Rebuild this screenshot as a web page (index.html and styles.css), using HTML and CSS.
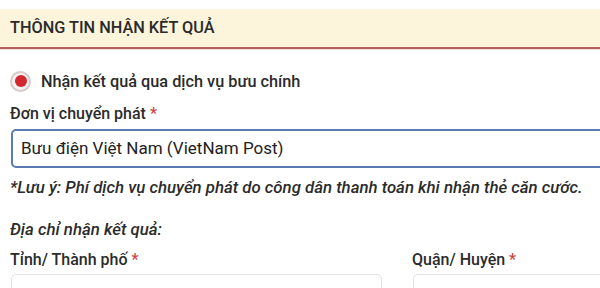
FILE: index.html
```html
<!DOCTYPE html>
<html lang="vi">
<head>
<meta charset="utf-8">
<link rel="stylesheet" href="styles.css">
</head>
<body>
<div class="page">
  <div class="section-head">THÔNG TIN NHẬN KẾT QUẢ</div>
  <div class="content">
    <label class="radio-row">
      <span class="radio"><span class="dot"></span></span>
      <span class="radio-text">Nhận kết quả qua dịch vụ bưu chính</span>
    </label>
    <div class="label">Đơn vị chuyển phát <span class="req">*</span></div>
    <div class="input">Bưu điện Việt Nam (VietNam Post)</div>
    <div class="note">*Lưu ý: Phí dịch vụ chuyển phát do công dân thanh toán khi nhận thẻ căn cước.</div>
    <div class="note addr">Địa chỉ nhận kết quả:</div>
    <div class="cols">
      <div class="col">
        <div class="label">Tỉnh/ Thành phố <span class="req">*</span></div>
        <div class="select"></div>
      </div>
      <div class="col">
        <div class="label">Quận/ Huyện <span class="req">*</span></div>
        <div class="select"></div>
      </div>
    </div>
  </div>
</div>
</body>
</html>
```

FILE: styles.css
```css
html, body {
  margin: 0;
  padding: 0;
  background: #ffffff;
  overflow: hidden;
}
body {
  width: 600px;
  height: 288px;
  font-family: Roboto, "Noto Sans", sans-serif;
  color: #2b2b2b;
}
.page {
  padding-top: 9px;
  height: 279px;
  overflow: hidden;
}
.section-head {
  height: 38px;
  line-height: 38px;
  background: #fcf5dc;
  border-bottom: 2px solid #b5605f;
  box-shadow: 0 1px 0 #f6dcd8;
  padding-left: 10px;
  font-size: 16.3px;
  font-weight: 500;
  color: #2a2a2a;
}
.content {
  padding-left: 10px;
  overflow: hidden;
}
.radio-row {
  display: flex;
  align-items: center;
  margin-top: 20px;
  height: 24px;
}
.radio {
  width: 17px;
  height: 17px;
  border-radius: 50%;
  border: 2px solid #d9c9c9;
  background: #f7f2f2;
  display: flex;
  align-items: center;
  justify-content: center;
  box-sizing: content-box;
}
.dot {
  width: 12px;
  height: 12px;
  border-radius: 50%;
  background: #d3272f;
}
.radio-text {
  margin-left: 10px;
  font-size: 16.3px;
  font-weight: 500;
}
.label {
  font-size: 16px;
  font-weight: 500;
  height: 24px;
  line-height: 24px;
  white-space: nowrap;
}
.content > .label {
  margin-top: 9px;
}
.req {
  color: #d0453f;
}
.input {
  margin-top: 3px;
  margin-left: 1px;
  width: 640px;
  height: 35px;
  line-height: 35px;
  border: 2px solid #5b7cb3;
  border-radius: 5px;
  padding-left: 8px;
  font-size: 17px;
  color: #222;
}
.note {
  margin-top: 7px;
  font-size: 16.8px;
  font-weight: 500;
  font-style: italic;
  height: 24px;
  line-height: 24px;
  white-space: nowrap;
}
.note.addr {
  margin-top: 18px;
}
.cols {
  display: grid;
  grid-template-columns: 372px 200px;
  column-gap: 30px;
  margin-top: 7px;
}
.select {
  margin-top: 2px;
  margin-left: 1px;
  height: 36px;
  border: 1px solid #e2e2e2;
  border-radius: 5px;
}
```
